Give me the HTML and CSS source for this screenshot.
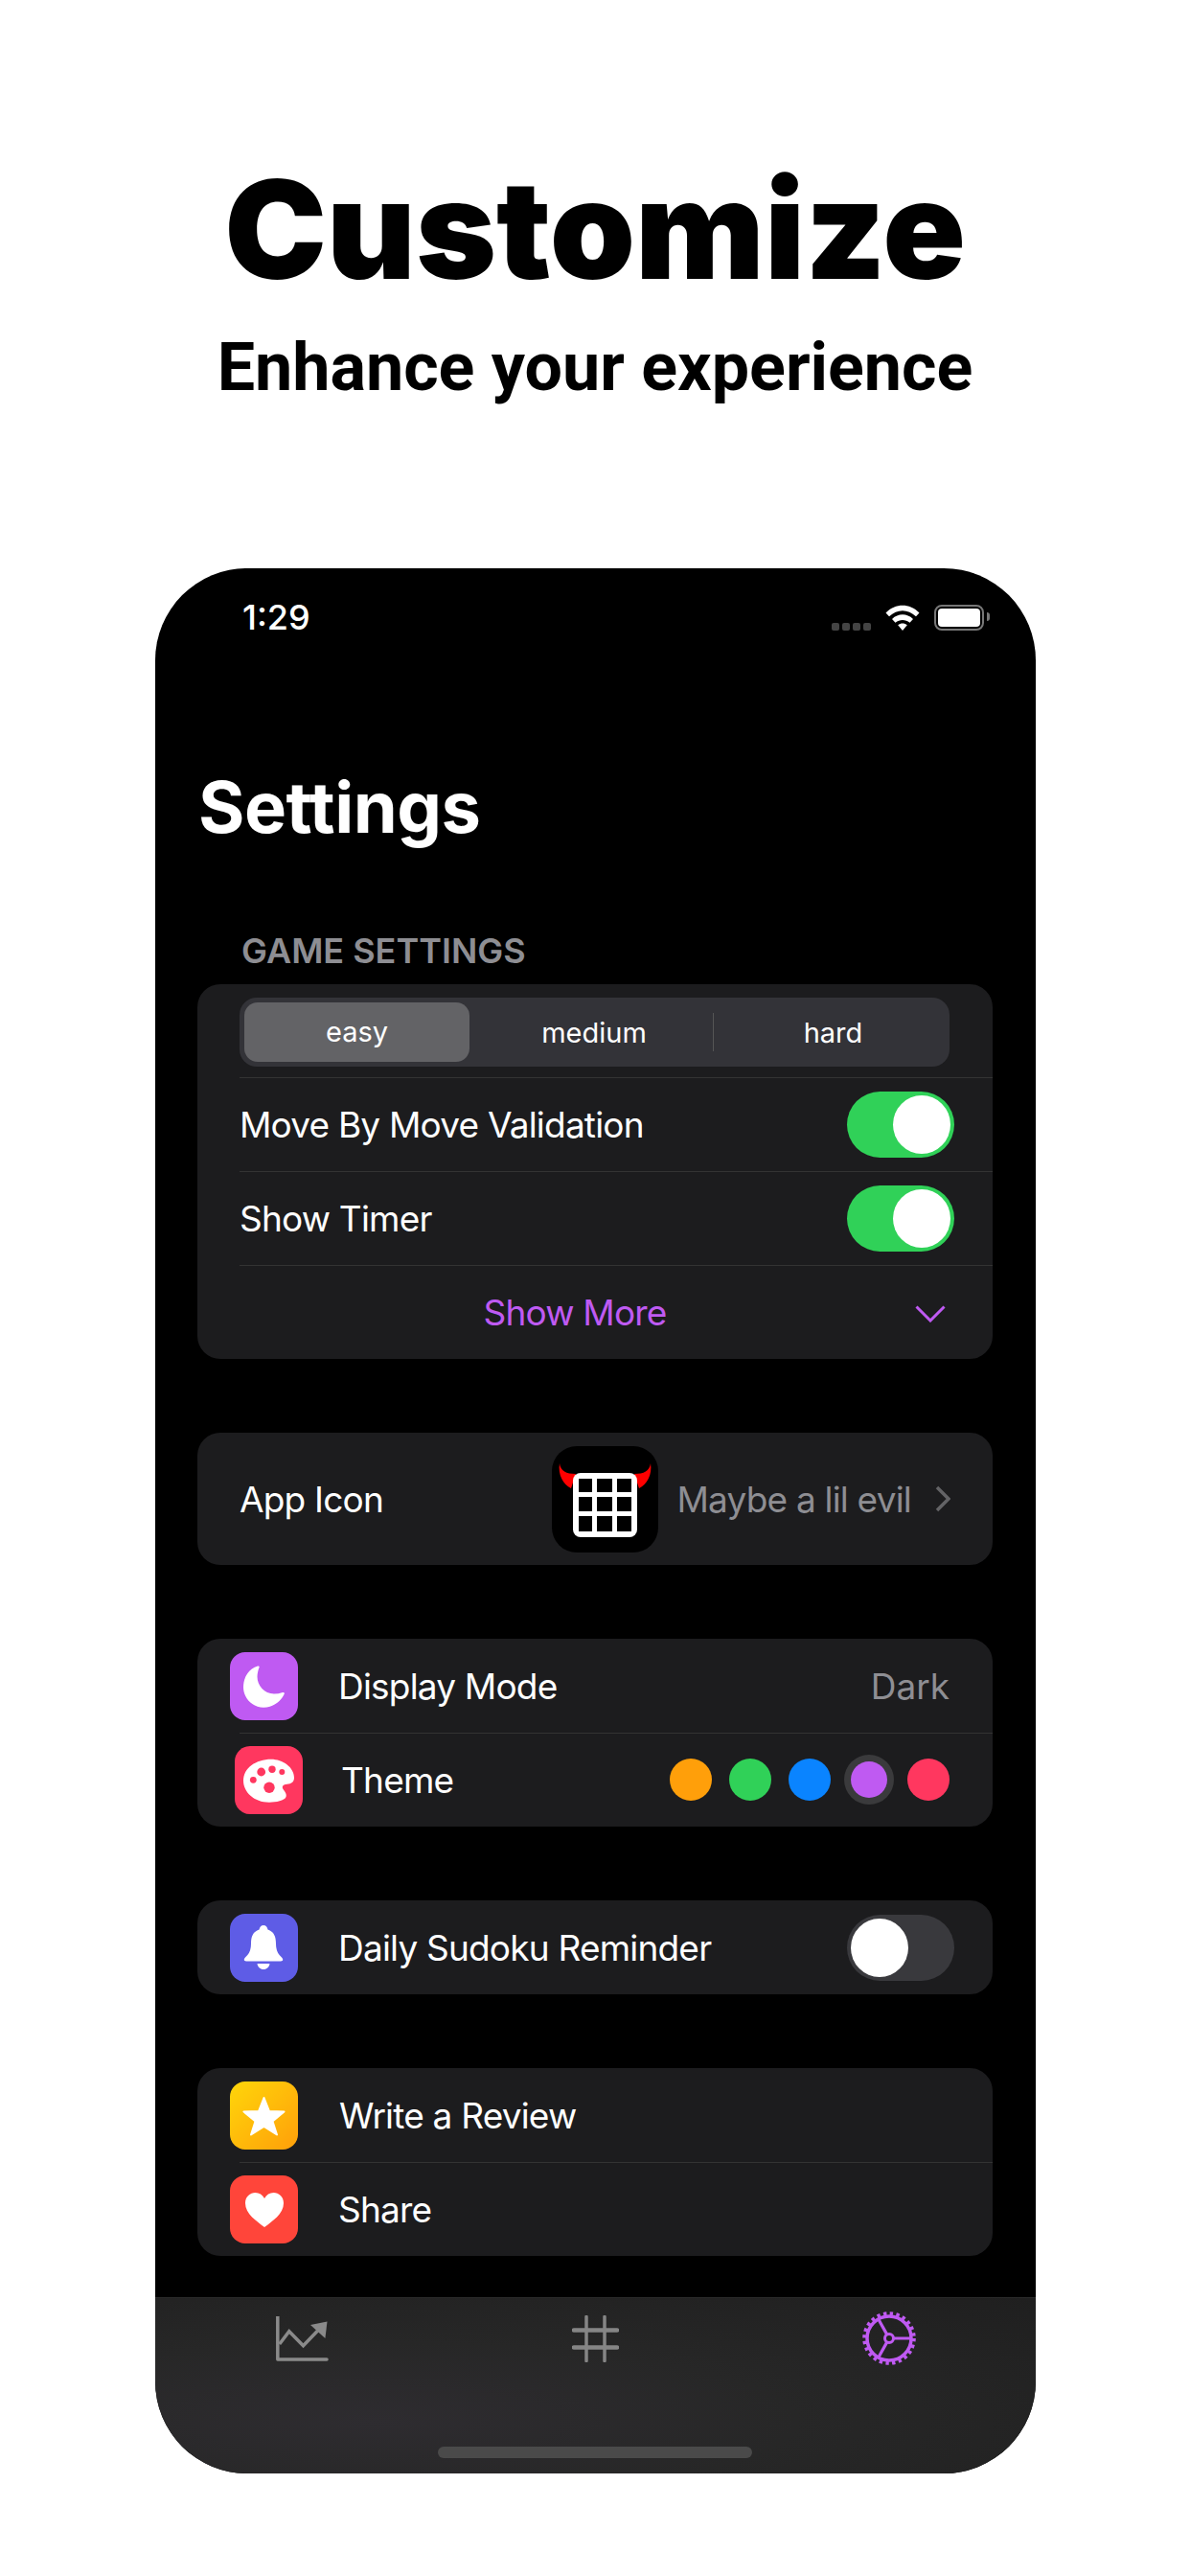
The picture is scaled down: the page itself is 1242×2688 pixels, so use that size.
FILE: index.html
```html
<!DOCTYPE html>
<html lang="en">
<head>
    <meta charset="UTF-8">
    <meta name="viewport" content="width=device-width, initial-scale=1.0">
    <title>Customize</title>
    <link rel="stylesheet" href="styles.css">
</head>
<body>
    <header class="hero">
        <h1 class="hero-title">Customize</h1>
        <p class="hero-sub">Enhance your experience</p>
    </header>

    <div class="phone">
        <div class="status">
            <span class="status-time">1:29</span>
            <div class="status-icons">
                <span class="signal"><i></i><i></i><i></i><i></i></span>
                <svg class="wifi" viewBox="0 0 36 27">
                    <path d="M0.5 8.5 C10.5 -1.8 25.5 -1.8 35.5 8.5 L32 12.3 C23.5 4.3 12.5 4.3 4 12.3Z" fill="#fff"/>
                    <path d="M7 15 C13.5 8.8 22.5 8.8 29 15 L25.5 18.8 C21 15 15 15 10.5 18.8Z" fill="#fff"/>
                    <path d="M13.2 21.2 C16 19 20 19 22.8 21.2 L18 27Z" fill="#fff"/>
                </svg>
                <span class="battery"><span class="battery-fill"></span></span>
            </div>
        </div>

        <h2 class="page-title">Settings</h2>

        <h3 class="section-label">GAME SETTINGS</h3>
        <section class="card">
            <div class="seg-row">
                <div class="segments">
                    <span class="seg seg-on">easy</span>
                    <span class="seg seg-mid">medium</span>
                    <span class="seg-line"></span>
                    <span class="seg seg-last">hard</span>
                </div>
            </div>
            <div class="row">
                <span class="label">Move By Move Validation</span>
                <span class="toggle toggle-on"><span class="knob"></span></span>
            </div>
            <div class="row">
                <span class="label">Show Timer</span>
                <span class="toggle toggle-on"><span class="knob"></span></span>
            </div>
            <div class="row row-more">
                <span class="more-text">Show More</span>
                <svg class="more-chevron" viewBox="0 0 32 18">
                    <path d="M1.5 1.5 L16 16 L30.5 1.5" fill="none" stroke="#bf5af2" stroke-width="3"/>
                </svg>
            </div>
        </section>

        <section class="card">
            <div class="row row-app">
                <span class="label">App Icon</span>
                <svg class="app-icon" viewBox="0 0 111 111">
                    <rect width="111" height="111" rx="26" fill="#000"/>
                    <path d="M8 18 C9 26 15 29 25 29 L20 44 C12 40 6 30 8 18Z" fill="#f00"/>
                    <path d="M103 18 C102 26 96 29 86 29 L91 44 C99 40 105 30 103 18Z" fill="#f00"/>
                    <rect x="22" y="28" width="67" height="67" rx="8" fill="#fff"/>
                    <rect x="28" y="34" width="14" height="14" fill="#000"/>
                    <rect x="47" y="34" width="16" height="14" fill="#000"/>
                    <rect x="68" y="34" width="15" height="14" fill="#000"/>
                    <rect x="28" y="53" width="14" height="15" fill="#000"/>
                    <rect x="47" y="53" width="16" height="15" fill="#000"/>
                    <rect x="68" y="53" width="15" height="15" fill="#000"/>
                    <rect x="28" y="73" width="14" height="16" fill="#000"/>
                    <rect x="47" y="73" width="16" height="16" fill="#000"/>
                    <rect x="68" y="73" width="15" height="16" fill="#000"/>
                </svg>
                <span class="value">Maybe a lil evil</span>
                <svg class="row-chevron" viewBox="0 0 16 28">
                    <path d="M2 2 L14 14 L2 26" fill="none" stroke="#636366" stroke-width="3.5"/>
                </svg>
            </div>
        </section>

        <section class="card">
            <div class="row row-icon">
                <svg class="tile" viewBox="0 0 71 71">
                    <rect width="71" height="71" rx="16" fill="#bf5af2"/>
                    <path d="M29 14.5 C20 17 14 26 14 36.5 C14 48 23.5 57.7 35 57.7 C45 57.7 53 51.5 56.8 43.5 C57 42 56 41.8 55 42 C52 43 49 43.5 46 43.5 C36 43.5 28.5 35 28.5 25.5 C28.5 22 29.5 18.5 30.5 16 C31 14.8 30 14.2 29 14.5Z" fill="#fff"/>
                </svg>
                <span class="label">Display Mode</span>
                <span class="value value-end">Dark</span>
            </div>
            <div class="row row-icon row-theme">
                <svg class="tile" viewBox="0 0 71 71">
                    <rect width="71" height="71" rx="16" fill="#ff375f"/>
                    <path d="M38 13.7 C50 13.7 62 22 62 33 C62 39 57 39.5 53 40 C50 40.5 49 42.5 50.5 45 C52.5 48 54.5 50 53.5 53 C52 57 43 58.7 36 58.7 C20 58.7 9 48 9 36 C9 23 22 13.7 38 13.7Z" fill="#fff"/>
                    <circle cx="27.7" cy="27" r="4.4" fill="#ff375f"/>
                    <circle cx="39" cy="24.3" r="3.7" fill="#ff375f"/>
                    <circle cx="49.3" cy="27" r="3" fill="#ff375f"/>
                    <circle cx="19.3" cy="35.3" r="3.4" fill="#ff375f"/>
                    <circle cx="36" cy="43.3" r="5.7" fill="#ff375f"/>
                </svg>
                <span class="label">Theme</span>
                <div class="swatches">
                    <span class="swatch swatch-orange"></span>
                    <span class="swatch swatch-green"></span>
                    <span class="swatch swatch-blue"></span>
                    <span class="swatch swatch-purple"></span>
                    <span class="swatch swatch-pink"></span>
                </div>
            </div>
        </section>

        <section class="card">
            <div class="row row-icon">
                <svg class="tile" viewBox="0 0 71 71">
                    <rect width="71" height="71" rx="16" fill="#5e5ce6"/>
                    <path d="M35 12 C37.5 12 39 14 39.5 16.5 C46 18.5 48 24 48 31 C48 38 50 42 54 45.5 C56 47.5 55.5 49.5 53 49.5 L17 49.5 C14.5 49.5 14 47.5 16 45.5 C20 42 22 38 22 31 C22 24 24 18.5 30.5 16.5 C31 14 32.5 12 35 12Z" fill="#fff"/>
                    <path d="M28.5 52 H41.5 C41 55.5 38.5 58 35 58 C31.5 58 29 55.5 28.5 52Z" fill="#fff"/>
                </svg>
                <span class="label">Daily Sudoku Reminder</span>
                <span class="toggle"><span class="knob"></span></span>
            </div>
        </section>

        <section class="card">
            <div class="row row-icon row-review">
                <svg class="tile" viewBox="0 0 71 71">
                    <defs>
                        <linearGradient id="starBg" x1="0" y1="0" x2="1" y2="1">
                            <stop offset="0" stop-color="#ffd60a"/>
                            <stop offset="1" stop-color="#ff9f0a"/>
                        </linearGradient>
                    </defs>
                    <rect width="71" height="71" rx="16" fill="url(#starBg)"/>
                    <path d="M35.5 17 L41 31 L56.5 31.5 L44.5 41.5 L49 55.5 L35.5 47 L22 55.5 L26.5 41.5 L14.5 31.5 L30 31Z" fill="#fff" stroke="#fff" stroke-width="2" stroke-linejoin="round"/>
                </svg>
                <span class="label">Write a Review</span>
            </div>
            <div class="row row-icon">
                <svg class="tile" viewBox="0 0 71 71">
                    <rect width="71" height="71" rx="16" fill="#ff453a"/>
                    <path d="M36 54 C28 48 16 40 16 29 C16 22 21 18 26.5 18 C30.5 18 34 20 36 24 C38 20 41.5 18 45.5 18 C51 18 56 22 56 29 C56 40 44 48 36 54Z" fill="#fff"/>
                </svg>
                <span class="label">Share</span>
            </div>
        </section>

        <nav class="tabbar">
            <div class="tabs">
                <svg class="tab-chart" viewBox="0 0 55 47">
                    <path d="M1.8 0 V45 H53" fill="none" stroke="#8a8a8a" stroke-width="3.5" stroke-linecap="round" stroke-linejoin="round"/>
                    <path d="M3.7 29 L13.8 15.7 L28.5 30.7 L43.6 15" fill="none" stroke="#8a8a8a" stroke-width="3.5"/>
                    <path d="M36 9 L53.5 5.5 L51.4 23Z" fill="#8a8a8a"/>
                </svg>
                <svg class="tab-hash" viewBox="0 0 49 49">
                    <path d="M15 1.5 V47.5 M34 1.5 V47.5" stroke="#858585" stroke-width="3.5" stroke-linecap="round"/>
                    <path d="M2 15.5 H47 M2 33.5 H47" stroke="#858585" stroke-width="4.5" stroke-linecap="round"/>
                </svg>
                <svg class="tab-gear" viewBox="0 0 56 56">
                    <circle cx="28" cy="28" r="25.8" fill="none" stroke="#bf5af2" stroke-width="4" stroke-dasharray="3.4 3.35"/>
                    <circle cx="28" cy="28" r="23" fill="none" stroke="#bf5af2" stroke-width="3.5"/>
                    <circle cx="28" cy="28" r="4.5" fill="none" stroke="#bf5af2" stroke-width="3"/>
                    <path d="M32.5 28 H52 M25.8 24.1 L16.5 7.5 M25.8 31.9 L16.5 48.5" stroke="#bf5af2" stroke-width="3.2"/>
                </svg>
            </div>
            <span class="home-bar"></span>
        </nav>
    </div>
</body>
</html>
```

FILE: styles.css
```css
* {
    box-sizing: border-box;
}

body {
    margin: 0;
    background-color: #fff;
    font-family: Inter, "Liberation Sans", sans-serif;
}

.hero {
    height: 593px;
    padding-top: 164px;
    text-align: center;
    color: #000;
}

.hero-title {
    margin: 0;
    font-size: 143px;
    line-height: 150px;
    font-weight: 900;
}

.hero-sub {
    margin: 27px 0 0;
    font-family: Roboto, sans-serif;
    font-size: 70px;
    line-height: 84px;
    font-weight: 700;
}

.phone {
    width: 919px;
    height: 1988px;
    margin-left: 162px;
    display: flex;
    flex-direction: column;
    background-color: #000;
    border-radius: 96px;
    overflow: hidden;
    color: #fff;
}

.phone > * {
    flex: none;
}

.status {
    height: 102px;
    padding: 0 54px 0 91px;
    display: flex;
    align-items: center;
    justify-content: space-between;
}

.status-time {
    font-size: 36px;
    font-weight: 500;
}

.status-icons {
    display: flex;
    align-items: center;
    gap: 15px;
}

.signal {
    display: flex;
    gap: 3px;
    margin-top: 19px;
}

.signal i {
    width: 8px;
    height: 8px;
    border-radius: 2px;
    background-color: #444;
}

.wifi {
    width: 36px;
    height: 27px;
}

.battery {
    width: 52px;
    height: 27px;
    position: relative;
    padding: 2px;
    border: 2px solid #777;
    border-radius: 8px;
}

.battery::after {
    content: "";
    position: absolute;
    right: -8px;
    top: 6px;
    width: 3px;
    height: 9px;
    background-color: #777;
    border-radius: 0 3px 3px 0;
}

.battery-fill {
    display: block;
    height: 100%;
    background-color: #fff;
    border-radius: 4px;
}

.page-title {
    margin: 102px 0 0 45px;
    font-size: 74px;
    line-height: 90px;
    font-weight: 700;
    letter-spacing: -0.5px;
}

.section-label {
    margin: 83px 0 0 90px;
    color: #8e8e93;
    font-size: 36px;
    line-height: 44px;
    font-weight: 600;
}

.card {
    width: 830px;
    margin: 0 0 77px 44px;
    background-color: #1c1c1e;
    border-radius: 24px;
    overflow: hidden;
}

.section-label + .card {
    margin-top: 13px;
}

.phone > .card:nth-last-child(2) {
    margin-bottom: 0;
}

.seg-row {
    height: 97px;
    padding: 14px 45px 0 44px;
}

.segments {
    height: 72px;
    padding: 5px;
    display: flex;
    align-items: center;
    background-color: #333338;
    border-radius: 18px;
    font-size: 29px;
    font-weight: 400;
}

.seg {
    text-align: center;
}

.seg-on {
    width: 235px;
    height: 62px;
    line-height: 62px;
    background-color: #636366;
    border-radius: 14px;
}

.seg-mid {
    width: 254px;
    padding-left: 6px;
}

.seg-last {
    flex: 1;
    padding-left: 8px;
}

.seg-line {
    width: 1px;
    height: 40px;
    background-color: #555;
}

.row {
    height: 98px;
    margin-left: 44px;
    padding-right: 40px;
    display: flex;
    align-items: center;
    justify-content: space-between;
    border-top: 1px solid #333;
}

.card > .row:first-child {
    border-top: none;
}

.label {
    font-size: 37px;
    letter-spacing: -0.8px;
}

.value {
    color: #8e8e93;
    font-size: 37px;
    letter-spacing: -0.8px;
}

.toggle {
    width: 112px;
    height: 69px;
    padding: 4px;
    display: flex;
    justify-content: flex-start;
    background-color: #39393d;
    border-radius: 35px;
}

.toggle-on {
    justify-content: flex-end;
    background-color: #30d158;
}

.knob {
    width: 60px;
    height: 61px;
    background-color: #fff;
    border-radius: 50%;
}

.row-more {
    justify-content: center;
    position: relative;
    padding-right: 86px;
}

.more-text {
    color: #bf5af2;
    font-size: 37px;
    letter-spacing: -0.8px;
}

.more-chevron {
    position: absolute;
    right: 49px;
    top: 41px;
    width: 32px;
    height: 18px;
}

.row-app {
    height: 138px;
    justify-content: flex-start;
}

.row-app .label {
    flex: 1;
}

.app-icon {
    width: 111px;
    height: 111px;
    margin-right: 19px;
}

.row-chevron {
    width: 16px;
    height: 28px;
    margin-left: 25px;
    margin-right: 4px;
}

.row-icon {
    justify-content: flex-start;
    margin-left: 0;
    padding-left: 34px;
    padding-right: 45px;
    border-top: none;
    position: relative;
}

.card > .row-icon + .row-icon::before {
    content: "";
    position: absolute;
    left: 44px;
    right: 0;
    top: 0;
    height: 1px;
    background-color: #333;
}

.tile {
    width: 71px;
    height: 71px;
    flex: none;
    margin-right: 42px;
}

.row-theme {
    padding-left: 39px;
}

.row-theme .tile {
    margin-right: 40px;
}

.row-review .tile {
    margin-right: 43px;
}

.value-end {
    margin-left: auto;
    letter-spacing: 0;
}

.row-icon .toggle {
    margin-left: auto;
    margin-right: -5px;
}

.swatches {
    margin-left: auto;
    display: flex;
    align-items: center;
    gap: 18px;
}

.swatch {
    width: 44px;
    height: 44px;
    border-radius: 50%;
}

.swatch-orange {
    background-color: #ff9f0a;
}

.swatch-green {
    background-color: #30d158;
}

.swatch-blue {
    background-color: #0a84ff;
}

.swatch-purple {
    background-color: #bf5af2;
    box-shadow: 0 0 0 7px #3a3a3c;
    width: 38px;
    height: 38px;
    margin: 0 3px;
}

.swatch-pink {
    background-color: #ff375f;
}

.tabbar {
    margin-top: auto;
    height: 184px;
    position: relative;
    background: radial-gradient(ellipse at 25% 70%, #2e2c30 0%, #272727 45%, #1f1f1f 100%);
    border-top: 1px solid #2a2a2a;
}

.tabs {
    display: grid;
    grid-template-columns: 306px 306px 307px;
    justify-items: center;
    align-items: center;
    height: 54px;
    margin-top: 14px;
}

.tab-chart {
    width: 55px;
    height: 47px;
}

.tab-hash {
    width: 49px;
    height: 49px;
}

.tab-gear {
    width: 56px;
    height: 56px;
}

.home-bar {
    position: absolute;
    left: 295px;
    bottom: 16px;
    width: 328px;
    height: 12px;
    background-color: #4a4a4a;
    border-radius: 6px;
}
```
